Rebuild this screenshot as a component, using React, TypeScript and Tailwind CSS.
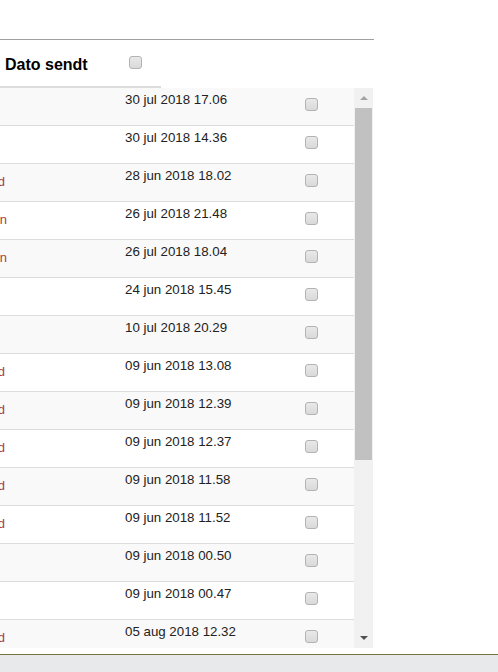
import React from "react";

type Row = { date: string; status?: string; end?: number };

const ROWS: Row[] = [
  { date: "30 jul 2018 17.06" },
  { date: "30 jul 2018 14.36" },
  { date: "28 jun 2018 18.02", status: "Bounced", end: 5 },
  { date: "26 jul 2018 21.48", status: "Afmeldt fra kampagnen", end: 7 },
  { date: "26 jul 2018 18.04", status: "Afmeldt fra kampagnen", end: 7 },
  { date: "24 jun 2018 15.45" },
  { date: "10 jul 2018 20.29" },
  { date: "09 jun 2018 13.08", status: "Bounced", end: 5 },
  { date: "09 jun 2018 12.39", status: "Bounced", end: 5 },
  { date: "09 jun 2018 12.37", status: "Bounced", end: 5 },
  { date: "09 jun 2018 11.58", status: "Bounced", end: 5 },
  { date: "09 jun 2018 11.52", status: "Bounced", end: 5 },
  { date: "09 jun 2018 00.50" },
  { date: "09 jun 2018 00.47" },
  { date: "05 aug 2018 12.32", status: "Bounced", end: 5 },
];

function Check() {
  return (
    <div className="w-[13px] h-[13px] rounded-[3px] border border-[#b3b3b3] bg-gradient-to-b from-[#e9e9e9] to-[#d9d9d9]" />
  );
}

export default function App() {
  return (
    <div
      className="w-[498px] h-[672px] bg-white flex flex-col text-[#222] overflow-hidden"
      style={{ fontFamily: '"Liberation Sans", Arial, sans-serif' }}
    >
      <div className="h-[39px] shrink-0" />
      <div className="w-[374px] border-t border-[#a0a0a0]" />

      {/* header */}
      <div className="h-[46px] shrink-0 flex items-start pt-[16px]">
        <div className="w-[129px] pl-[5px] text-[16px] leading-[18px] font-bold text-black">Dato sendt</div>
        <Check />
      </div>
      <div className="w-[161px] h-[2px] bg-[#dddddd] shrink-0" />

      {/* body */}
      <div className="h-[560px] shrink-0 flex w-[373px]">
        <div className="w-[354px] overflow-hidden">
          {ROWS.map((r, i) => (
            <div
              key={i}
              className={`h-[38px] flex items-start border-b border-[#dddddd] ${i % 2 === 0 ? "bg-[#f9f9f9]" : "bg-white"}`}
            >
              <div className="w-[125px] shrink-0 h-full relative">
                {r.status && (
                  <div
                    className={`flex justify-end pt-[9px] ${r.end === 7 ? "w-[7px]" : "w-[5px]"}`}
                  >
                    <span className="whitespace-nowrap text-[13px] leading-[18px] text-[#b03c3a]">{r.status}</span>
                  </div>
                )}
              </div>
              <div className="w-[180px] shrink-0 pt-[3px] text-[13.3px] leading-[18px] text-[#222]">{r.date}</div>
              <div className="pt-[10px]">
                <Check />
              </div>
            </div>
          ))}
        </div>

        {/* scrollbar */}
        <div className="w-[19px] bg-[#f1f1f1] flex flex-col">
          <div className="h-[20px] flex items-center justify-center">
            <div className="w-0 h-0 border-l-[4px] border-r-[4px] border-b-[4px] border-l-transparent border-r-transparent border-b-[#a3a3a3]" />
          </div>
          <div className="h-[352px] mx-[1px] bg-[#c1c1c1]" />
          <div className="flex-1" />
          <div className="h-[20px] flex items-center justify-center">
            <div className="w-0 h-0 border-l-[4px] border-r-[4px] border-t-[4px] border-l-transparent border-r-transparent border-t-[#505050]" />
          </div>
        </div>
      </div>

      <div className="h-[6px] shrink-0" />
      <div className="border-t border-[#78733f]" />
      <div className="flex-1 bg-[#e8e9eb]" />
    </div>
  );
}
